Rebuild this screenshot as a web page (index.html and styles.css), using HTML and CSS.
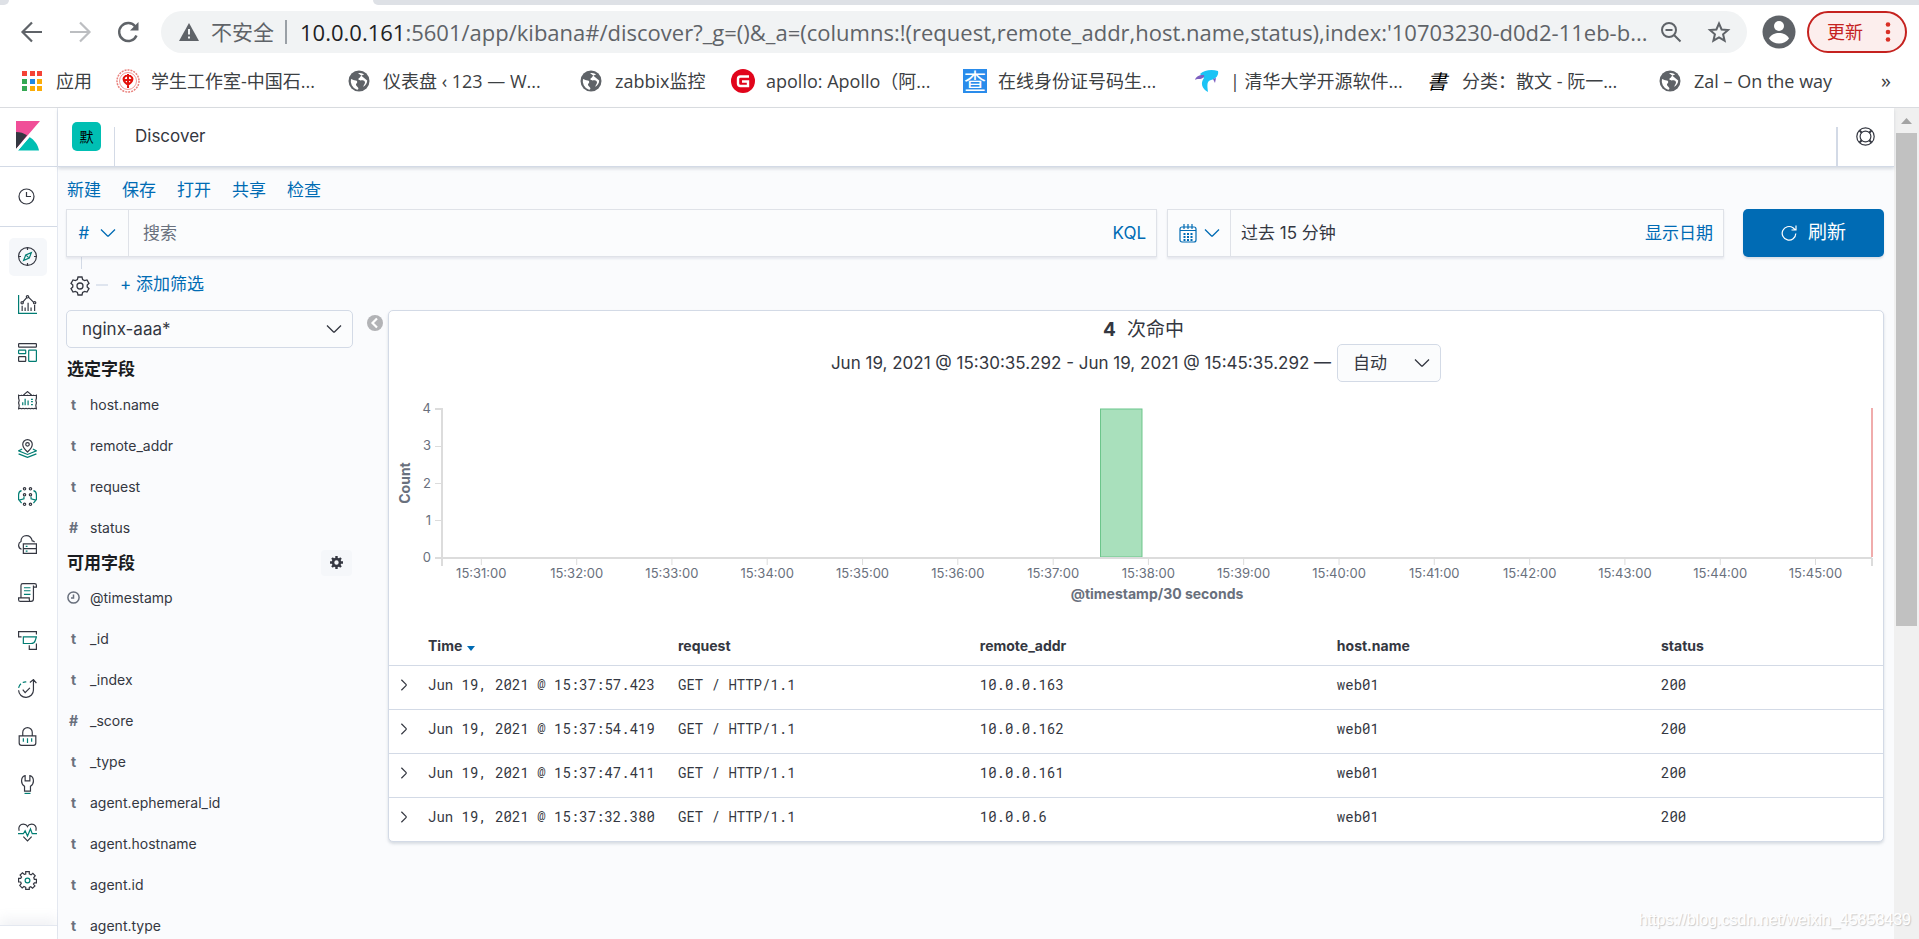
FILE: index.html
```html
<!DOCTYPE html>
<html lang="zh-CN">
<head>
<meta charset="utf-8">
<title>Discover - Kibana</title>
<link rel="stylesheet" href="styles.css">
</head>
<body>
<svg class="defs" aria-hidden="true">
  <symbol id="globe" viewBox="0 0 22 22"><circle cx="11" cy="11" r="10.500" fill="#5f6368"/><path d="M3 9c2 .5 3 1.500 4.500 1.500S10 12 8.500 13.500 9 16 10 17.500 10 20 8.500 19.500A9 9 0 0 1 3 9zM10 3c2 0 5 .3 6 1.500-1 1-3 .5-3.500 2S10 8 10.500 9.500s3.500.500 5 1 2 2 1 3.500-1 2.500-2 3c3-1 4.700-4 4.700-6.500" fill="#fff"/></symbol>
  <symbol id="down" viewBox="0 0 16 16"><path d="M1 4.500l6.300 6.200a1 1 0 0 0 1.400 0L15 4.500" fill="none" stroke="currentColor" stroke-width="1.300"/></symbol>
  <symbol id="right" viewBox="0 0 16 16"><path d="M5 2l5.300 5.300a1 1 0 0 1 0 1.400L5 14" fill="none" stroke="currentColor" stroke-width="1.400"/></symbol>
</svg>

<header class="browser">
  <div class="tabstrip"><span class="tab-edge"></span><span class="tab-active"></span><span class="tab-rest"></span></div>
  <div class="toolbar">
    <button class="nav" aria-label="后退"><svg width="24" height="24" viewBox="0 0 24 24" fill="none" stroke="#5f6368" stroke-width="2.200"><path d="M22 12H3M12 2.500L2.500 12l9.500 9.500"/></svg></button>
    <button class="nav" aria-label="前进"><svg width="24" height="24" viewBox="0 0 24 24" fill="none" stroke="#bcbec1" stroke-width="2.200"><path d="M2 12h19M12 2.500l9.500 9.500-9.500 9.500"/></svg></button>
    <button class="nav" aria-label="刷新页面"><svg width="24" height="24" viewBox="0 0 24 24"><path d="M20.500 15.500A9 9 0 1 1 19.300 6.500" fill="none" stroke="#5f6368" stroke-width="2.400"/><path d="M22.500 2v8.500H14z" fill="#5f6368"/></svg></button>
    <div class="omnibox">
      <svg width="20" height="18" viewBox="0 0 20 18"><path d="M10 0l10 18H0z" fill="#5f6368"/><path d="M10 6v5.500M10 13.500v2" stroke="#f1f3f4" stroke-width="2"/></svg>
      <span class="insecure">不安全</span>
      <span class="url"><b>10.0.0.161</b>:5601/app/kibana#/discover?_g=()&amp;_a=(columns:!(request,remote_addr,host.name,status),index:'10703230-d0d2-11eb-b...</span>
      <button class="omni-btn" aria-label="缩放"><svg width="24" height="24" viewBox="0 0 24 24" fill="none" stroke="#5f6368" stroke-width="2"><circle cx="10" cy="10" r="7"/><path d="M6.500 10h7M15 15l6.500 6.500"/></svg></button>
      <button class="omni-btn" aria-label="收藏"><svg width="24" height="24" viewBox="0 0 24 24" fill="none" stroke="#5f6368" stroke-width="2"><path d="M12 3.500l2.600 6 6.400.600-4.900 4.200 1.500 6.400-5.600-3.400-5.600 3.400 1.500-6.400L3 10.100l6.400-.600z"/></svg></button>
    </div>
    <button class="profile" aria-label="用户"><svg width="34" height="34" viewBox="0 0 34 34"><circle cx="17" cy="17" r="16.500" fill="#5f6368"/><circle cx="17" cy="11" r="5" fill="#fff"/><path d="M7 23.500c2-4 6-5.500 10-5.500s8 1.500 10 5.500c-2.300 3.300-6 5-10 5s-7.700-1.700-10-5z" fill="#fff"/></svg></button>
    <button class="update">更新<svg width="6" height="20" viewBox="0 0 6 20" fill="#d93025"><circle cx="3" cy="2.500" r="2.300"/><circle cx="3" cy="10" r="2.300"/><circle cx="3" cy="17.500" r="2.300"/></svg></button>
  </div>
  <nav class="bookmarks">
    <a href="#" class="bm bm-apps"><svg width="24" height="22" viewBox="0 0 24 22"><g fill="#f44336"><path d="M0 1h5v5H0zM8 1h5v5H8zM15 1h5v5h-5z"/></g><path d="M0 9h5v5H0zM0 16h5v5H0z" fill="#34a853"/><path d="M8 9h5v5H8z" fill="#1e88e5"/><path d="M15 9h5v5h-5zM8 16h5v5H8zM15 16h5v5h-5z" fill="#fbac08"/></svg>应用</a>
    <a href="#" class="bm"><svg width="24" height="24" viewBox="0 0 24 24"><circle cx="12" cy="12" r="11" fill="none" stroke="#e9807c" stroke-width="1.500" stroke-dasharray="2 1"/><circle cx="12" cy="12" r="8.500" fill="#fff" stroke="#e9807c" stroke-width=".8"/><path d="M12 5v14M8 8.500c2-3 6-3 8 0 2 4-4 7-4 7s-6-3-4-7zM8 11h8" fill="none" stroke="#e3120b" stroke-width="2"/></svg>学生工作室-中国石...</a>
    <a href="#" class="bm"><svg width="24" height="22"><use href="#globe" width="22" height="22"/></svg>仪表盘 ‹ 123 — W...</a>
    <a href="#" class="bm bm-short"><svg width="24" height="22"><use href="#globe" width="22" height="22"/></svg>zabbix监控</a>
    <a href="#" class="bm"><svg width="24" height="24" viewBox="0 0 24 24"><circle cx="12" cy="12" r="12" fill="#e1041b"/><path d="M18 7.500H9.500a2.500 2.500 0 0 0-2.500 2.500v4.500A2.500 2.500 0 0 0 9.500 17H17v-4.500h-6" fill="none" stroke="#fff" stroke-width="2.400"/></svg>apollo: Apollo（阿...</a>
    <a href="#" class="bm"><span class="cha">查</span>在线身份证号码生...</a>
    <a href="#" class="bm"><svg width="24" height="24" viewBox="0 0 24 24"><path d="M5 5c4-4 12-5 18-3 1 4-2 8-7 9-4 1-4 4-3 12-6-3-8-9-4-14" fill="#1cc3f5"/><path d="M0 11c1-4 5-5.500 9-5 1 2-2 4-5 4-2 0-3 .3-4 1zM18 10l2 4 1-5z" fill="#7d5fc0"/></svg>| 清华大学开源软件...</a>
    <a href="#" class="bm"><span class="shu">書</span>分类：散文 - 阮一...</a>
    <a href="#" class="bm bm-last"><svg width="24" height="22"><use href="#globe" width="22" height="22"/></svg>Zal – On the way</a>
    <button class="more" aria-label="更多书签">»</button>
  </nav>
</header>

<div class="viewport">
  <nav class="side" aria-label="Kibana">
    <a href="#" class="logo" aria-label="Kibana"><svg width="24" height="30" viewBox="0 0 24 30"><path d="M0 0h24L0 28z" fill="#f04e98"/><path d="M0 11c4 0 8 1.200 11 3.300L0 28z" fill="#343741"/><path d="M13.500 16c5 3 8.500 8 9.500 13.500H2z" fill="#00bfb3"/><path d="M0 28l13-14.500 1.800 1.300L2 29.500H0z" fill="#fff"/></svg></a>
    <a href="#" class="recent" aria-label="最近查看"><svg width="17" height="17" viewBox="0 0 17 17" fill="none" stroke="#343741" stroke-width="1.200"><circle cx="8.500" cy="8.500" r="7.500"/><path d="M8.500 4v4.500H13"/></svg></a>
    <div class="apps">
      <a href="#" class="app on" aria-label="Discover"><svg viewBox="0 0 32 32"><circle cx="16" cy="16" r="15"/><path d="M16 1v4M16 27v4M1 16h4M27 16h4"/><path class="t" d="M22.500 9.500l-3.500 9-9.500 4 3.500-9z"/><path class="t" d="M14 14l4 4"/></svg></a>
      <a href="#" class="app" aria-label="Visualize"><svg viewBox="0 0 32 32"><path class="t" d="M1 0v31h31"/><path d="M7 18v9M12 21v6M17 13v14M22 21v6M28 17v10M8 12l7-8M18 4l8 8"/><circle cx="7" cy="13" r="2"/><circle cx="16" cy="3" r="2"/><circle cx="28" cy="13" r="2"/></svg></a>
      <a href="#" class="app" aria-label="Dashboard"><svg viewBox="0 0 32 32"><rect x="1" y="1" width="30" height="6" rx="1"/><rect class="t" x="1" y="12" width="12" height="6" rx="1"/><rect x="1" y="23" width="12" height="8" rx="1"/><rect class="t" x="18" y="12" width="13" height="19" rx="1"/></svg></a>
      <a href="#" class="app" aria-label="Canvas"><svg viewBox="0 0 32 32"><path d="M9 7l7-6 7 6M1 7c2 1 3 1 5 0 2 1 3 1 5 0 2 1 3 1 5 0 2 1 3 1 5 0 2 1 3 1 5 0 2 1 3 1 5 0v5l-1 4 1 4-1 4 1 6c-2-1-3-1-5 0-2-1-3-1-5 0-2-1-3-1-5 0-2-1-3-1-5 0-2-1-3-1-5 0-2-1-3-1-5 0l1-6-1-4 1-4-1-4z"/><path class="t" d="M8 19v5M12 13v11M17 16v8M22 14h3M22 18h3M22 23h3"/></svg></a>
      <a href="#" class="app" aria-label="Maps"><svg viewBox="0 0 32 32"><path d="M16 22s-8-7-8-13a8 8 0 0 1 16 0c0 6-8 13-8 13z"/><circle cx="16" cy="9" r="3"/><path class="t" d="M7 17l-6 3 15 6 15-6-6-3M1 25l15 6 15-6"/></svg></a>
      <a href="#" class="app" aria-label="Machine Learning"><svg viewBox="0 0 32 32"><circle cx="11" cy="3" r="2"/><circle cx="21" cy="3" r="2"/><circle cx="11" cy="13" r="2"/><circle cx="21" cy="13" r="2"/><circle cx="11" cy="29" r="2"/><circle cx="21" cy="29" r="2"/><path class="t" d="M6 6C2 7 1 9 1 13v8l5 6M26 6c4 1 5 3 5 7v8l-5 6M2 22l8-2v-4M30 22l-8-2v-4"/></svg></a>
      <a href="#" class="app" aria-label="Infrastructure"><svg viewBox="0 0 32 32"><path d="M6 24a7 7 0 0 1-1-13C5 5 9 1 14 1c6 0 9 4 10 9 2 0 3 1 4 2"/><path d="M9 15h22v8H9zM9 23h22v8H9z"/><path class="t" d="M13 19h3M13 27h3"/></svg></a>
      <a href="#" class="app" aria-label="Logs"><svg viewBox="0 0 32 32"><path d="M5 25V4a3 3 0 0 1 3-3h20a3 3 0 0 1 3 3v3h-5V4M26 7v20a4 4 0 0 1-4 4H4a3 3 0 0 1-3-3v-3h18v3a3 3 0 0 0 3 3"/><path class="t" d="M10 8h11M10 13h11M10 19h11"/></svg></a>
      <a href="#" class="app" aria-label="APM"><svg viewBox="0 0 32 32"><path d="M6 10H1V1h30v5M19 24v7h12V21"/><path class="t" d="M9 10h22l-2 6c-1 4-4 5-7 5H9z"/></svg></a>
      <a href="#" class="app" aria-label="Uptime"><svg viewBox="0 0 32 32"><path d="M20 6l6-5 5 6M26 1v17a12.500 12.500 0 0 1-25 1M8 18l4 5 8-8"/><path class="t" d="M1 15a12 12 0 0 1 4-7M8 6a12 12 0 0 1 6-1"/></svg></a>
      <a href="#" class="app" aria-label="SIEM"><svg viewBox="0 0 32 32"><path d="M8 15V9a8 8 0 0 1 16 0v6M2 15h28v12c0 3-2 4-4 4H6c-2 0-4-1-4-4z"/><path class="t" d="M9 19v6M16 19v8M23 19v6"/></svg></a>
      <a href="#" class="app" aria-label="Dev Tools"><svg viewBox="0 0 32 32"><path d="M12 1v9h8V1c4 1 6 5 6 9s-2 7-5 9v8H11v-8c-3-2-5-5-5-9s2-8 6-9z"/><path class="t" d="M11 31h10"/></svg></a>
      <a href="#" class="app" aria-label="Monitoring"><svg viewBox="0 0 32 32"><path d="M2 13C0 6 4 2 9 2c4 0 6 2 7 4 1-2 3-4 7-4 5 0 9 4 7 11M9 23l7 7 7-7"/><path class="t" d="M0 18h9l3-5 4 9 5-12 3 8h8"/></svg></a>
      <a href="#" class="app" aria-label="Management"><svg viewBox="0 0 32 32"><path d="M13 1h6v4l3 1.500L25 4l4 4-2.500 3 1 3H31v6h-3.500L26 22l2.500 3-4 4-3-2.500-2.500 1V31h-6v-3.500L10 26l-3 2.500-4-4L5.500 21l-1-2.500H1v-6h3.500L6 10 3.500 7l4-4 3 2.500L13 5z"/><circle class="t" cx="16" cy="16" r="4"/></svg></a>
    </div>
    <div class="side-foot"></div>
  </nav>

  <div class="page">
    <header class="top">
      <div class="space"><button class="avatar" aria-label="默认空间">默</button></div>
      <h1 class="crumb">Discover</h1>
      <div class="help"><button aria-label="帮助"><svg width="19" height="19" viewBox="0 0 19 19" fill="none" stroke="#343741" stroke-width="1.200"><circle cx="9.500" cy="9.500" r="8.700"/><circle cx="9.500" cy="9.500" r="5.400"/><path stroke-width="2" d="M3.500 3.500l2.300 2.300M15.500 3.500l-2.300 2.300M3.500 15.500l2.300-2.300M15.500 15.500l-2.300-2.300"/></svg></button></div>
    </header>

    <main class="content">
      <nav class="menu"><a href="#">新建</a><a href="#">保存</a><a href="#">打开</a><a href="#">共享</a><a href="#">检查</a></nav>

      <div class="query">
        <div class="box search">
          <button class="seg saved" aria-label="已保存查询">#<svg width="16" height="16"><use href="#down"/></svg></button>
          <input type="text" placeholder="搜索" aria-label="搜索">
          <button class="link">KQL</button>
        </div>
        <div class="box dates">
          <button class="seg cal" aria-label="日期快速选择"><svg width="18" height="19" viewBox="0 0 18 19" fill="none" stroke="currentColor" stroke-width="1.200"><rect x="1" y="3" width="16" height="15" rx="2"/><path d="M1 6.500h16M5 0v5M9 0v5M13 0v5"/><path stroke-width="2" stroke-dasharray="2 1.500" d="M4.500 10h9M4.500 13h9M4.500 16h9"/></svg><svg width="16" height="16"><use href="#down"/></svg></button>
          <button class="range">过去 15 分钟</button>
          <button class="link">显示日期</button>
        </div>
        <button class="refresh"><svg width="16" height="16" viewBox="0 0 16 16" fill="none" stroke="#fff" stroke-width="1.200"><path d="M14.800 8.500A6.800 6.800 0 1 1 12 2.800L14.500 5M15 .5V5h-4.500"/></svg>刷新</button>
      </div>

      <div class="filters">
        <button class="gear" aria-label="筛选选项"><svg width="20" height="20" viewBox="0 0 20 20" fill="none" stroke="#343741" stroke-width="1.300"><path d="M8 1h4l.6 2.500 2 1.100L17 3.900l2 3.400L17.200 9v2l1.800 1.700-2 3.400-2.400-.7-2 1.100L12 19H8l-.6-2.500-2-1.100-2.400.7-2-3.400L2.800 11V9L1 7.300l2-3.400 2.400.7 2-1.100z"/><circle cx="10" cy="10" r="3"/></svg></button>
        <span class="dash"></span>
        <a href="#">+ 添加筛选</a>
      </div>

      <div class="columns">
        <aside class="fields">
          <div class="pick"><select aria-label="索引模式"><option>nginx-aaa*</option></select><svg width="16" height="16"><use href="#down"/></svg></div>
          <h2>选定字段</h2>
          <ul>
            <li><i>t</i>host.name</li><li><i>t</i>remote_addr</li><li><i>t</i>request</li><li><i>#</i>status</li>
          </ul>
          <div class="avail"><h2>可用字段</h2><button aria-label="字段设置"><svg width="13" height="13" viewBox="0 0 13 13"><circle cx="6.500" cy="6.500" r="3.500" fill="none" stroke="#343741" stroke-width="2.600"/><path d="M6.500 0v2.500M6.500 10.500V13M0 6.500h2.500M10.500 6.500H13M2 2l1.500 1.500M9.500 9.500L11 11M11 2L9.500 3.500M3.500 9.500L2 11" stroke="#343741" stroke-width="2.400"/></svg></button></div>
          <ul>
            <li><i><svg width="13" height="13" viewBox="0 0 13 13" fill="none" stroke="#69707d" stroke-width="1.500"><circle cx="6.500" cy="6.500" r="5.600"/><path d="M6.500 3.500v3.500H4"/></svg></i>@timestamp</li><li><i>t</i>_id</li><li><i>t</i>_index</li><li><i>#</i>_score</li><li><i>t</i>_type</li><li><i>t</i>agent.ephemeral_id</li><li><i>t</i>agent.hostname</li><li><i>t</i>agent.id</li><li><i>t</i>agent.type</li>
          </ul>
        </aside>
        <button class="collapse" aria-label="折叠"><svg width="16" height="16" viewBox="0 0 16 16"><circle cx="8" cy="8" r="8" fill="#b2b3b6"/><path d="M10 3.500L5.500 8l4.500 4.500" fill="none" stroke="#fff" stroke-width="2.200"/></svg></button>

        <section class="panel">
          <div class="hits"><strong>4</strong>次命中</div>
          <div class="span"><span>Jun 19, 2021 @ 15:30:35.292 - Jun 19, 2021 @ 15:45:35.292 —</span>
            <div class="pick interval"><select aria-label="时间间隔"><option>自动</option></select><svg width="16" height="16"><use href="#down"/></svg></div>
          </div>
          <div class="chart">
            <svg width="100%" height="223" role="img" aria-label="Count / @timestamp">
              <rect x="46.05%" y="7" width="2.9%" height="148" fill="#a9e0bc" stroke="#6bc58b"/>
              <g class="axis">
                <path d="M0 6v158M-7 7H0M-7 156H0"/><path class="thin" d="M-7 44.500H0M-7 81.500H0M-7 118.500H0"/>
                <line x1="0" x2="100%" y1="156" y2="156"/>
                <line x1="100%" x2="100%" y1="156" y2="164"/>
              </g>
              <line class="now" x1="100%" x2="100%" y1="6" y2="155"/>
              <g class="ticks">
                <line x1="2.75%" x2="2.75%" y1="157" y2="163"/><line x1="9.42%" x2="9.42%" y1="157" y2="163"/><line x1="16.08%" x2="16.08%" y1="157" y2="163"/><line x1="22.74%" x2="22.74%" y1="157" y2="163"/><line x1="29.41%" x2="29.41%" y1="157" y2="163"/><line x1="36.07%" x2="36.07%" y1="157" y2="163"/><line x1="42.74%" x2="42.74%" y1="157" y2="163"/><line x1="49.4%" x2="49.4%" y1="157" y2="163"/><line x1="56.06%" x2="56.06%" y1="157" y2="163"/><line x1="62.73%" x2="62.73%" y1="157" y2="163"/><line x1="69.39%" x2="69.39%" y1="157" y2="163"/><line x1="76.06%" x2="76.06%" y1="157" y2="163"/><line x1="82.72%" x2="82.72%" y1="157" y2="163"/><line x1="89.39%" x2="89.39%" y1="157" y2="163"/><line x1="96.05%" x2="96.05%" y1="157" y2="163"/>
              </g>
              <g class="xl">
                <text x="2.75%" y="176">15:31:00</text><text x="9.42%" y="176">15:32:00</text><text x="16.08%" y="176">15:33:00</text><text x="22.74%" y="176">15:34:00</text><text x="29.41%" y="176">15:35:00</text><text x="36.07%" y="176">15:36:00</text><text x="42.74%" y="176">15:37:00</text><text x="49.4%" y="176">15:38:00</text><text x="56.06%" y="176">15:39:00</text><text x="62.73%" y="176">15:40:00</text><text x="69.39%" y="176">15:41:00</text><text x="76.06%" y="176">15:42:00</text><text x="82.72%" y="176">15:43:00</text><text x="89.39%" y="176">15:44:00</text><text x="96.05%" y="176">15:45:00</text>
              </g>
              <g class="yl"><text x="-11" y="11">4</text><text x="-11" y="48">3</text><text x="-11" y="86">2</text><text x="-11" y="123">1</text><text x="-11" y="160">0</text></g>
              <g class="titles"><text x="50%" y="197">@timestamp/30 seconds</text><text transform="translate(-32 81) rotate(-90)">Count</text></g>
            </svg>
          </div>
          <table>
            <colgroup><col class="c0"><col class="c1"><col class="c2"><col class="c3"><col class="c4"><col></colgroup>
            <thead><tr><th></th><th>Time<svg class="sort" width="8" height="5" viewBox="0 0 8 5"><path d="M0 0h8L4 5z" fill="#006bb4"/></svg></th><th>request</th><th>remote_addr</th><th>host.name</th><th>status</th></tr></thead>
            <tbody>
              <tr><td><button aria-label="展开"><svg width="14" height="14"><use href="#right"/></svg></button></td><td>Jun 19, 2021 @ 15:37:57.423</td><td>GET / HTTP/1.1</td><td>10.0.0.163</td><td>web01</td><td>200</td></tr>
              <tr><td><button aria-label="展开"><svg width="14" height="14"><use href="#right"/></svg></button></td><td>Jun 19, 2021 @ 15:37:54.419</td><td>GET / HTTP/1.1</td><td>10.0.0.162</td><td>web01</td><td>200</td></tr>
              <tr><td><button aria-label="展开"><svg width="14" height="14"><use href="#right"/></svg></button></td><td>Jun 19, 2021 @ 15:37:47.411</td><td>GET / HTTP/1.1</td><td>10.0.0.161</td><td>web01</td><td>200</td></tr>
              <tr><td><button aria-label="展开"><svg width="14" height="14"><use href="#right"/></svg></button></td><td>Jun 19, 2021 @ 15:37:32.380</td><td>GET / HTTP/1.1</td><td>10.0.0.6</td><td>web01</td><td>200</td></tr>
            </tbody>
          </table>
        </section>
      </div>
    </main>
  </div>

  <div class="scroll" aria-hidden="true"><svg width="11" height="6" viewBox="0 0 11 6"><path d="M0 6l5.500-6L11 6z" fill="#a3a3a3"/></svg><span class="thumb"></span></div>
  <div class="mark">https://blog.csdn.net/weixin_45858439</div>
</div>
</body>
</html>
```
FILE: styles.css
```css
* { box-sizing: border-box; }
html, body { height: 100%; }
body {
  margin: 0;
  display: flex;
  flex-direction: column;
  overflow: hidden;
  font: 17px/24px Inter, "Noto Sans CJK SC", sans-serif;
  color: #343741;
  background: #fff;
}
button, input, select { font: inherit; color: inherit; margin: 0; padding: 0; border: 0; background: none; }
button { cursor: pointer; display: flex; align-items: center; justify-content: center; }
a { color: #006bb4; text-decoration: none; }
svg { flex: none; }
.defs { position: absolute; width: 0; height: 0; }

/* browser frame */
.browser { font-family: "Open Sans", "Noto Sans CJK SC", sans-serif; border-bottom: 1px solid #dadce0; }
.tabstrip { display: flex; height: 5px; background: #fff; }
.tab-edge { width: 9px; background: #dee1e6; border-bottom-right-radius: 5px; }
.tab-active { width: 364px; }
.tab-rest { flex: 1; background: #dee1e6; border-bottom-left-radius: 5px; }
.toolbar { display: flex; align-items: center; height: 54px; padding: 0 12px 0 20px; }
.nav { width: 24px; margin-right: 24px; }
.omnibox { flex: 1; min-width: 0; display: flex; align-items: center; height: 42px; margin-left: -3px; padding: 0 16px 0 18px; border-radius: 21px; background: #f1f3f4; color: #5f6368; }
.insecure { margin-left: 12px; padding-right: 11px; border-right: 2px solid #9aa0a6; font-size: 21px; line-height: 24px; white-space: nowrap; }
.url { flex: 1; min-width: 0; margin-left: 13px; font-size: 22px; line-height: 30px; white-space: nowrap; overflow: hidden; }
.url b { font-weight: 400; color: #202124; }
.omni-btn { width: 24px; margin-left: 24px; }
.omni-btn:nth-of-type(1) { margin-left: 8px; }
.profile { margin: 0 11px 0 15px; }
.update { width: 100px; height: 42px; gap: 22px; padding-left: 4px; border: 2px solid #c5221f; border-radius: 21px; background: #fceeed; color: #c5221f; font-size: 18px; }
.bookmarks { display: flex; height: 48px; padding: 0 28px 5px 22px; font-size: 18px; }
.bm { flex: 0 0 232px; display: flex; align-items: center; gap: 11px; color: #3c4043; white-space: nowrap; }
.bm-apps { flex-basis: 94px; gap: 10px; }
.bm-short { flex-basis: 151px; }
.bm-last { flex-basis: 200px; }
.more { margin-left: auto; font-size: 20px; color: #3c4043; }
.cha { width: 24px; height: 24px; background: #2a8ceb; color: #fff; font-size: 22px; line-height: 22px; text-align: center; }
.shu { width: 24px; color: #000; font: 20px/24px "Noto Sans CJK TC", sans-serif; font-style: italic; }

/* app */
.viewport { flex: 1; min-height: 0; display: flex; position: relative; }
.side { flex: none; width: 58px; display: flex; flex-direction: column; background: #fff; border-right: 1px solid #e4e8f0; }
.logo { height: 59px; padding: 13px 0 0 16px; border-bottom: 1px solid #d3dae6; }
.recent { height: 60px; display: grid; place-items: center; padding-right: 4px; border-bottom: 1px solid #d3dae6; }
.apps { flex: 1; display: flex; flex-direction: column; gap: 10px; padding: 11px 9px 0; }
.app { display: grid; place-items: center; width: 38px; height: 38px; padding: 0 2px 1px 0; border-radius: 5px; }
.app.on { background: #f5f7fa; }
.app svg { width: 19px; height: 19px; fill: none; stroke: #343741; stroke-width: 2; }
.app .t { stroke: #017d73; }
.side-foot { height: 14px; border-top: 1px solid #e4e8f0; box-shadow: 0 -6px 12px rgba(152, 162, 179, .15); }
.page { flex: 1; min-width: 0; display: flex; flex-direction: column; background: #fafbfd; }
.top { position: relative; display: flex; height: 59px; background: #fff; border-bottom: 1px solid #d3dae6; box-shadow: 0 2px 3px rgba(152, 162, 179, .35); }
.space { width: 57px; padding-left: 14px; display: flex; background: linear-gradient(#d3dae6, #d3dae6) right bottom / 1px 39px no-repeat; }
.avatar { width: 29px; height: 29px; margin-top: 14px; border-radius: 5px; background: #00bfb3; color: #000; font-size: 14px; }
.crumb { margin: 16px 0 0 20px; font-size: 17px; line-height: 24px; font-weight: 400; }
.help { margin-left: auto; width: 58px; padding: 19px 0 0 20px; background: linear-gradient(#d3dae6, #d3dae6) left bottom / 2px 39px no-repeat; }
.content { flex: 1; min-height: 0; padding: 11px 10px 0 8px; }
.menu { display: flex; gap: 21px; height: 31px; padding-left: 1px; }
.query { display: flex; height: 48px; }
.box { display: flex; border: 1px solid #dfe2e8; background: #fbfcfd; box-shadow: 0 2px 2px rgba(152, 162, 179, .2); }
.search { flex: 1091; min-width: 0; }
.dates { flex: 556; min-width: 0; margin: 0 19px 0 10px; }
.seg { gap: 11px; width: 62px; border-right: 1px solid #dfe2e8; color: #006bb4; }
.cal { width: 63px; gap: 7px; }
.search input { flex: 1; min-width: 0; padding: 0 14px; outline: 0; }
.search input::placeholder { color: #69707d; opacity: 1; }
.link { padding: 0 10px; color: #006bb4; }
.range { flex: 1; justify-content: flex-start; padding-left: 10px; }
.refresh { width: 141px; gap: 11px; border-radius: 5px; background: #006bb4; color: #fff; font-size: 19px; box-shadow: 0 2px 2px rgba(152, 162, 179, .3); }
.filters { display: flex; align-items: center; height: 53px; padding-left: 4px; background: linear-gradient(#d3dae6, #d3dae6) 15px 0 / 1px 12px no-repeat; }
.gear { margin-top: 5px; }
.dash { width: 12px; height: 2px; margin: 2px 12px 0 6px; background: #dfe5ef; }
.columns { display: flex; align-items: flex-start; }
.fields { flex: none; width: 287px; }
.pick { position: relative; }
.pick select { appearance: none; display: block; width: 100%; height: 38px; padding: 0 15px; border: 1px solid #d3dae6; border-radius: 5px; background: #fbfcfd; color: #343741; }
.pick svg { position: absolute; right: 11px; top: 11px; pointer-events: none; }
.fields h2 { margin: 0; padding: 9px 0 3px 1px; font-size: 17px; line-height: 24px; color: #1a1c21; }
.fields ul { list-style: none; margin: 0; padding: 0; font-size: 14px; }
.fields li { display: flex; align-items: center; height: 41px; }
.fields i { width: 15px; margin-right: 9px; display: flex; justify-content: center; font-style: normal; font-weight: 700; color: #69707d; }
.avail { display: flex; align-items: center; justify-content: space-between; height: 29px; }
.avail h2 { padding: 0 0 0 1px; }
.avail button { width: 31px; height: 26px; margin-right: 1px; border-radius: 4px; background: #f5f7fa; }
.collapse { width: 35px; padding: 5px 0 0 14px; justify-content: flex-start; }
.panel { flex: 1; min-width: 0; border: 1px solid #d3dae6; border-radius: 5px; background: #fff; box-shadow: 0 2px 3px rgba(152, 162, 179, .35); }
.hits { padding: 4px 0 0 15px; font-size: 19px; line-height: 29px; text-align: center; }
.hits strong { margin-right: 11px; }
.span { display: flex; align-items: center; justify-content: center; gap: 6px; }
.interval { width: 104px; }
.chart { padding: 20px 11px 0 53px; }
.chart svg { display: block; overflow: visible; }
.axis, .ticks { stroke: #dcdcdc; fill: none; stroke-width: 2; }
.ticks, .thin { stroke-width: 1; }
.now { stroke: #f0acac; stroke-width: 2; }
.chart text { fill: #69707d; }
.xl, .titles { text-anchor: middle; }
.xl, .yl { font-size: 13px; }
.yl { text-anchor: end; }
.titles { font-size: 14px; font-weight: 700; }
table { width: 100%; table-layout: fixed; border-collapse: collapse; font-size: 14px; }
.c0 { width: 31px; }
.c1 { width: 250px; }
.c2 { width: 20.2%; }
.c3 { width: 23.9%; }
.c4 { width: 21.7%; }
th, td { padding: 0 8px; text-align: left; white-space: nowrap; }
th { height: 40px; padding-top: 2px; font-weight: 700; }
td { height: 44px; padding-bottom: 4px; border-top: 1px solid #d3dae6; font-family: "Roboto Mono", "Liberation Mono", monospace; }
.sort { margin-left: 5px; }

.scroll { flex: none; width: 25px; display: flex; flex-direction: column; align-items: center; padding-top: 10px; gap: 9px; background: #f0f0f0; }
.thumb { width: 21px; height: 60%; background: #c1c1c1; }
.mark { position: absolute; right: 8px; bottom: 7px; font: 16px/24px "Liberation Sans", sans-serif; color: #fff; text-shadow: 1px 1px 1px #c8c8c8; }
```
